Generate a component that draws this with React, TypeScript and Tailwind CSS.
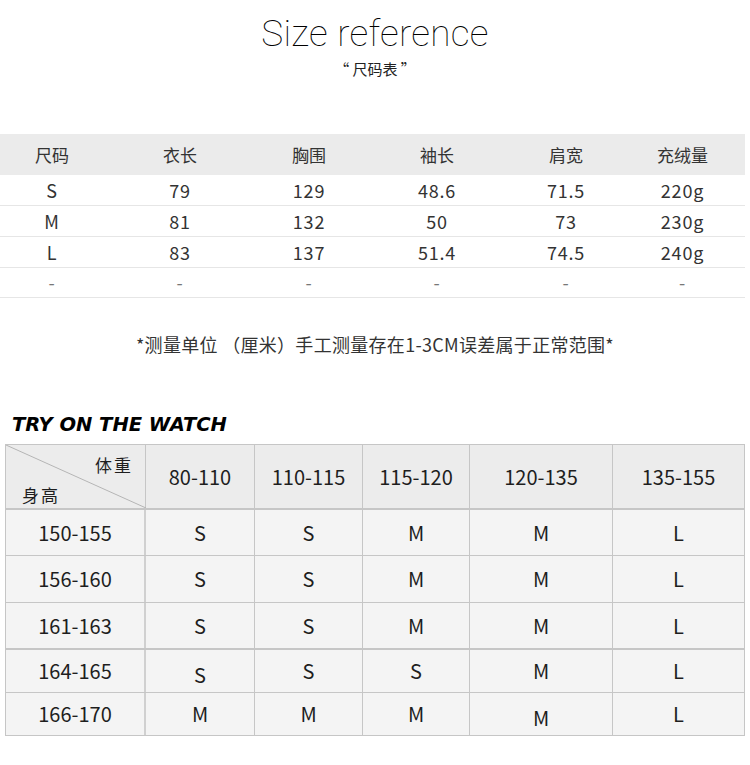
import React from "react";

const cjk = { fontFamily: '"Noto Sans CJK SC", "Noto Sans", sans-serif' };

const top = [
  ["S", "79", "129", "48.6", "71.5", "220g"],
  ["M", "81", "132", "50", "73", "230g"],
  ["L", "83", "137", "51.4", "74.5", "240g"],
  ["-", "-", "-", "-", "-", "-"],
];

const heads = ["尺码", "衣长", "胸围", "袖长", "肩宽", "充绒量"];

const bottom: { h: string; v: string[]; off?: number[]; rowH: string }[] = [
  { h: "150-155", v: ["S", "S", "M", "M", "L"], rowH: "h-[46px]" },
  { h: "156-160", v: ["S", "S", "M", "M", "L"], rowH: "h-[47px]" },
  { h: "161-163", v: ["S", "S", "M", "M", "L"], rowH: "h-[47px]" },
  { h: "164-165", v: ["S", "S", "S", "M", "L"], off: [1, 0, 0, 0, 0], rowH: "h-[43px]" },
  { h: "166-170", v: ["M", "M", "M", "M", "L"], off: [0, 0, 0, 1, 0], rowH: "h-[42px]" },
];

const weights = ["80-110", "110-115", "115-120", "120-135", "135-155"];

export default function App() {
  return (
    <div className="w-[750px] h-[765px] bg-white text-[#222] overflow-hidden" style={cjk}>
      <div
        className="pt-[14px] text-center text-[37px] leading-[40px] font-thin tracking-[0.3px] text-black"
        style={{ fontFamily: '"Roboto", "Open Sans", sans-serif' }}
      >
        Size reference
      </div>
      <div className="mt-[5px] text-center text-[15px] leading-[20px] text-[#222]">“ 尺码表 ”</div>

      <div className="mt-[55px] w-[745px]">
        <div className="grid grid-cols-[104px_152px_106px_150px_108px_125px] h-[41px] bg-[#ebebeb] items-center text-[17px] text-[#333]">
          {heads.map((h) => (
            <div key={h} className="text-center">{h}</div>
          ))}
        </div>
        {top.map((r, i) => (
          <div
            key={i}
            className={`grid grid-cols-[104px_152px_106px_150px_108px_125px] items-center text-[18px] tracking-[0.8px] text-[#333] border-b border-[#e6e6e6] ${i === 3 ? "h-[30px]" : "h-[31px]"}`}
          >
            {r.map((c, j) => (
              <div key={j} className={`text-center ${c === "-" ? "text-[#777]" : ""}`}>{c}</div>
            ))}
          </div>
        ))}
      </div>

      <div className="mt-[34px] text-center text-[18px] leading-[24px] text-[#333] tracking-[0.3px]">
        *测量单位 （厘米）手工测量存在1-3CM误差属于正常范围*
      </div>

      <div
        className="mt-[57px] ml-[12px] text-[19.5px] leading-[24px] font-bold italic text-black"
        style={{ fontFamily: '"DejaVu Sans", sans-serif' }}
      >
        TRY ON THE WATCH
      </div>

      <div className="mt-[7px] ml-[5px] w-[740px] border border-[#c6c6c6] text-[20px] text-[#1e1e1e]">
        <div className="grid grid-cols-[140px_109px_108px_107px_143px_131px] h-[65px] bg-[#ececec] border-b-2 border-[#c6c6c6]">
          <div className="relative border-r border-[#c6c6c6]">
            <svg className="absolute inset-0" width="140" height="63" viewBox="0 0 140 63" preserveAspectRatio="none">
              <line x1="0" y1="0" x2="140" y2="63" stroke="#b5b5b5" strokeWidth="1" />
            </svg>
            <div className="absolute right-[12px] top-[7px] text-[17px] tracking-[2px]">体重</div>
            <div className="absolute left-[16px] top-[37px] text-[17px] tracking-[2px]">身高</div>
          </div>
          {weights.map((w, i) => (
            <div key={w} className={`flex items-center justify-center ${i < 4 ? "border-r border-[#c6c6c6]" : ""}`}>
              {w}
            </div>
          ))}
        </div>
        {bottom.map((r, i) => (
          <div
            key={r.h}
            className={`grid grid-cols-[140px_109px_108px_107px_143px_131px] bg-[#f4f4f4] ${r.rowH} ${i < 4 ? (i === 2 ? "border-b-2 border-[#c6c6c6]" : "border-b border-[#c6c6c6]") : ""}`}
          >
            <div className="flex items-center justify-center border-r-2 border-[#d0d0d0]">{r.h}</div>
            {r.v.map((c, j) => (
              <div
                key={j}
                className={`flex items-center justify-center ${j < 4 ? "border-r border-[#c6c6c6]" : ""} ${r.off && r.off[j] ? "pt-[8px]" : ""}`}
              >
                {c}
              </div>
            ))}
          </div>
        ))}
      </div>
    </div>
  );
}
